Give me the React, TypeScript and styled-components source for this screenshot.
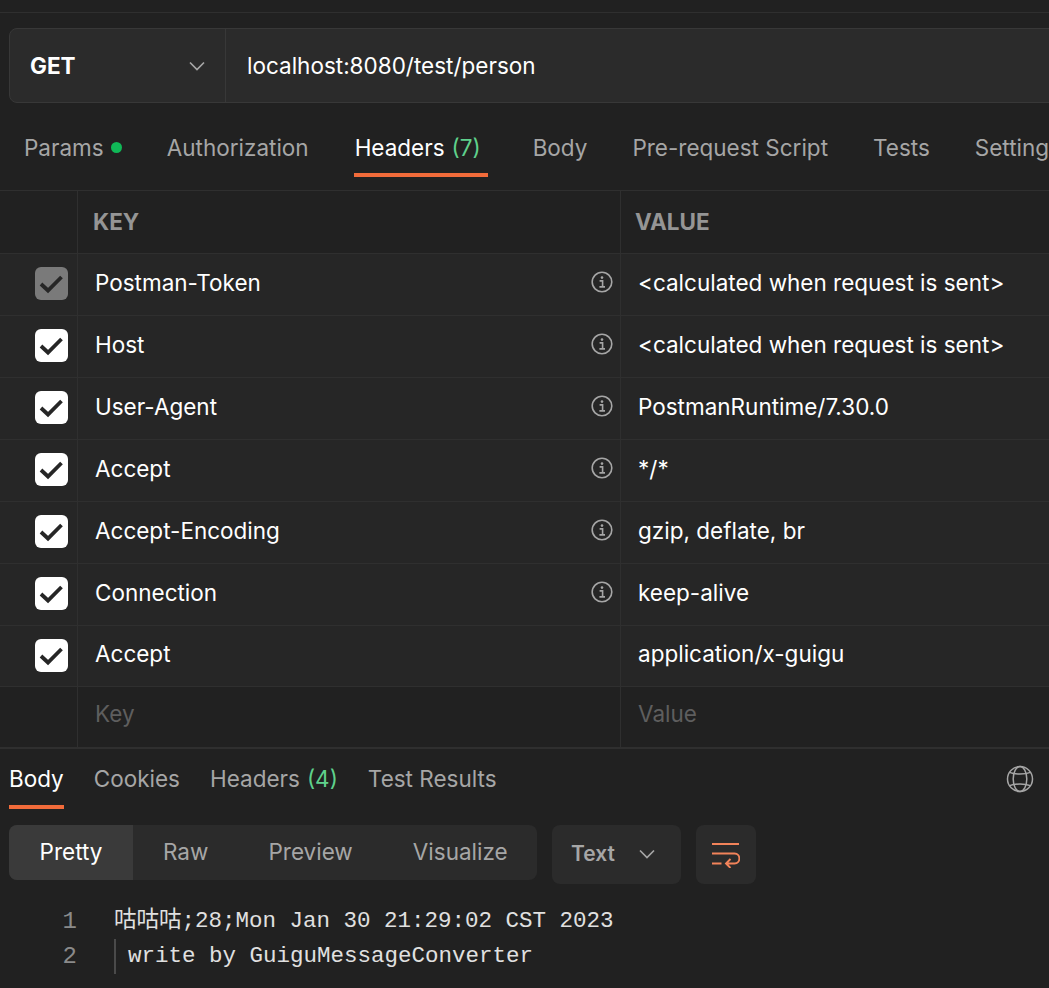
import React from "react";
import styled, { createGlobalStyle } from "styled-components";

const GlobalStyle = createGlobalStyle`
  html, body {
    margin: 0;
    background: #212121;
  }
  * {
    box-sizing: border-box;
  }
`;

interface headerRow {
  key: string;
  value: string;
  info?: boolean;
  locked?: boolean;
}

const rows: headerRow[] = [
  { key: "Postman-Token", value: "<calculated when request is sent>", info: true, locked: true },
  { key: "Host", value: "<calculated when request is sent>", info: true },
  { key: "User-Agent", value: "PostmanRuntime/7.30.0", info: true },
  { key: "Accept", value: "*/*", info: true },
  { key: "Accept-Encoding", value: "gzip, deflate, br", info: true },
  { key: "Connection", value: "keep-alive", info: true },
  { key: "Accept", value: "application/x-guigu" },
];

const Chevron = () => (
  <svg width="18" height="18" viewBox="0 0 18 18" fill="none">
    <path d="M2 5.5 9 12.5 16 5.5" stroke="#a6a6a6" strokeWidth="1.7" />
  </svg>
);

const InfoIcon = () => (
  <svg width="22" height="22" viewBox="0 0 22 22" fill="none">
    <circle cx="11" cy="11" r="9.8" stroke="#a6a6a6" strokeWidth="1.6" />
    <circle cx="11" cy="6.6" r="1.3" fill="#a6a6a6" />
    <path d="M8.6 9.9H11.6V15.6M8.4 15.9H14" stroke="#a6a6a6" strokeWidth="1.6" />
  </svg>
);

const CheckIcon = () => (
  <svg width="33" height="33" viewBox="0 0 33 33" fill="none">
    <path d="M6 17 13 23.5 26.5 10" stroke="#262626" strokeWidth="3.8" />
  </svg>
);

const GlobeIcon = () => (
  <svg width="28" height="28" viewBox="0 0 28 28" fill="none" stroke="#a6a6a6" strokeWidth="1.5">
    <circle cx="14" cy="14" r="12.5" />
    <ellipse cx="14" cy="14" rx="6.8" ry="12.5" />
    <path d="M3.6 7.4C9 9.6 19 9.6 24.4 7.4M3.6 20.6C9 18.4 19 18.4 24.4 20.6" />
  </svg>
);

const WrapIcon = () => (
  <svg width="28" height="26" viewBox="0 0 28 26" fill="none" stroke="#f2835a" strokeWidth="1.9">
    <path d="M0 2H27M0 11.5H22.5C29 11.5 29 21.5 22.5 21.5H14M0 21.5H9.5M18.5 17 14 21.5 18.5 26" />
  </svg>
);

const App = () => {
  return (
    <Page>
      <GlobalStyle />
      <TopBar />
      <UrlRow>
        <MethodBox>
          GET
          <Chevron />
        </MethodBox>
        <UrlBox>localhost:8080/test/person</UrlBox>
      </UrlRow>
      <RequestTabs>
        <RequestTab>
          Params <Dot />
        </RequestTab>
        <RequestTab>Authorization</RequestTab>
        <ActiveRequestTab>
          Headers <Count>(7)</Count>
        </ActiveRequestTab>
        <RequestTab>Body</RequestTab>
        <RequestTab>Pre-request Script</RequestTab>
        <RequestTab>Tests</RequestTab>
        <RequestTab>Settings</RequestTab>
      </RequestTabs>
      <Table>
        <HeadRow>
          <CheckCell />
          <HeadCell>KEY</HeadCell>
          <HeadCell>VALUE</HeadCell>
        </HeadRow>
        {rows.map((row, i) => (
          <Row key={i}>
            <CheckCell>
              <CheckBox $locked={row.locked}>
                <CheckIcon />
              </CheckBox>
            </CheckCell>
            <KeyCell>
              {row.key}
              {row.info && <InfoIcon />}
            </KeyCell>
            <ValueCell>{row.value}</ValueCell>
          </Row>
        ))}
        <EmptyRow>
          <CheckCell />
          <KeyCell $placeholder>Key</KeyCell>
          <ValueCell $placeholder>Value</ValueCell>
        </EmptyRow>
      </Table>
      <ResponseTabs>
        <ActiveResponseTab>Body</ActiveResponseTab>
        <ResponseTab>Cookies</ResponseTab>
        <ResponseTab>
          Headers <Count>(4)</Count>
        </ResponseTab>
        <ResponseTab>Test Results</ResponseTab>
        <GlobeSlot>
          <GlobeIcon />
        </GlobeSlot>
      </ResponseTabs>
      <Toolbar>
        <Segments>
          <ActiveSegment>Pretty</ActiveSegment>
          <Segment>Raw</Segment>
          <Segment>Preview</Segment>
          <Segment>Visualize</Segment>
        </Segments>
        <FormatSelect>
          Text
          <Chevron />
        </FormatSelect>
        <WrapButton>
          <WrapIcon />
        </WrapButton>
      </Toolbar>
      <Code>
        <CodeLine>
          <LineNumber>1</LineNumber>
          <CodeText>咕咕咕;28;Mon Jan 30 21:29:02 CST 2023</CodeText>
        </CodeLine>
        <CodeLine>
          <LineNumber>2</LineNumber>
          <IndentedText>write by GuiguMessageConverter</IndentedText>
        </CodeLine>
      </Code>
    </Page>
  );
};

export default App;

const Page = styled.div`
  width: 1049px;
  height: 988px;
  overflow: hidden;
  background: #212121;
  font-family: Inter, "Noto Sans CJK SC", sans-serif;
  font-size: 22.5px;
  color: #ffffff;
`;
const TopBar = styled.div`
  height: 13px;
  border-bottom: 1px solid #2f2f2f;
`;
const UrlRow = styled.div`
  display: flex;
  width: 1100px;
  height: 75px;
  margin: 15px 0 0 9px;
  background: #2b2b2b;
  border: 1px solid #383838;
  border-radius: 8px;
`;
const MethodBox = styled.div`
  display: flex;
  align-items: center;
  justify-content: space-between;
  width: 216px;
  padding: 0 19px 0 20px;
  border-right: 1px solid #383838;
  font-weight: 700;
`;
const UrlBox = styled.div`
  display: flex;
  align-items: center;
  padding-left: 21px;
`;
const RequestTabs = styled.div`
  display: flex;
  gap: 45px;
  height: 88px;
  padding-left: 24px;
  white-space: nowrap;
  border-bottom: 1px solid #2f2f2f;
`;
const RequestTab = styled.div`
  display: flex;
  flex-shrink: 0;
  align-items: center;
  gap: 7px;
  height: 74px;
  padding-top: 14px;
  color: #a6a6a6;
`;
const ActiveRequestTab = styled(RequestTab)`
  color: #ffffff;
  width: 134px;
  padding-left: 1px;
  box-shadow: inset 0 -4px 0 #f26b3a;
`;
const Count = styled.span`
  color: #5fd18c;
`;
const Dot = styled.span`
  width: 11px;
  height: 11px;
  border-radius: 50%;
  background: #10b857;
`;
const Table = styled.div`
  border-bottom: 2px solid #2f2f2f;
`;
const gridColumns = "78px 543px 1fr";
const HeadRow = styled.div`
  display: grid;
  grid-template-columns: ${gridColumns};
  height: 63px;
  border-bottom: 1px solid #2f2f2f;
`;
const Row = styled.div`
  display: grid;
  grid-template-columns: ${gridColumns};
  height: 62px;
  background: #262626;
  border-bottom: 1px solid #2f2f2f;
  &:nth-child(8) {
    height: 61px;
  }
`;
const EmptyRow = styled(Row)`
  height: 60px;
  background: #212121;
  border-bottom: 0;
`;
const CheckCell = styled.div`
  display: flex;
  align-items: center;
  justify-content: flex-end;
  padding: 0 9px 2px 0;
  border-right: 1px solid #2f2f2f;
`;
const CheckBox = styled.div<{ $locked?: boolean }>`
  width: 33px;
  height: 33px;
  border-radius: 6px;
  background: ${(p) => (p.$locked ? "#7a7a7a" : "#ffffff")};
`;
const HeadCell = styled.div`
  display: flex;
  align-items: center;
  padding: 0 0 2px 15px;
  font-weight: 700;
  color: #959595;
  border-right: 1px solid #2f2f2f;
  &:last-child {
    padding-left: 14px;
    border-right: 0;
  }
`;
const KeyCell = styled.div<{ $placeholder?: boolean }>`
  display: flex;
  align-items: center;
  justify-content: space-between;
  padding: 0 7px ${(p) => (p.$placeholder ? "7px" : "5px")} 17px;
  color: ${(p) => (p.$placeholder ? "#5e5e5e" : "#ffffff")};
  border-right: 1px solid #2f2f2f;
`;
const ValueCell = styled.div<{ $placeholder?: boolean }>`
  display: flex;
  align-items: center;
  padding: 0 0 ${(p) => (p.$placeholder ? "7px" : "5px")} 17px;
  color: ${(p) => (p.$placeholder ? "#5e5e5e" : "#ffffff")};
`;
const ResponseTabs = styled.div`
  display: flex;
  gap: 30px;
  height: 60px;
  padding: 0 15px 0 9px;
`;
const ResponseTab = styled.div`
  display: flex;
  align-items: center;
  gap: 7px;
  height: 60px;
  padding-bottom: 2px;
  color: #a6a6a6;
`;
const ActiveResponseTab = styled(ResponseTab)`
  color: #ffffff;
  box-shadow: inset 0 -4px 0 #f26b3a;
`;
const GlobeSlot = styled.div`
  display: flex;
  align-items: center;
  height: 60px;
  margin-left: auto;
`;
const Toolbar = styled.div`
  display: flex;
  align-items: flex-start;
  gap: 15px;
  height: 59px;
  margin-top: 16px;
  padding-left: 9px;
`;
const Segments = styled.div`
  display: flex;
  width: 528px;
  height: 55px;
  background: #2b2b2b;
  border-radius: 8px;
  overflow: hidden;
`;
const Segment = styled.div`
  display: flex;
  flex-shrink: 0;
  align-items: center;
  justify-content: center;
  padding: 0 30px 3px;
  color: #a6a6a6;
`;
const ActiveSegment = styled(Segment)`
  width: 124px;
  background: #3a3a3a;
  color: #ffffff;
`;
const FormatSelect = styled.div`
  display: flex;
  align-items: center;
  justify-content: space-between;
  width: 129px;
  height: 59px;
  padding: 0 25px 2px 19px;
  background: #2b2b2b;
  border-radius: 8px;
  font-size: 21px;
  font-weight: 600;
  color: #a6a6a6;
`;
const WrapButton = styled.div`
  display: flex;
  align-items: center;
  justify-content: center;
  width: 60px;
  height: 59px;
  background: #2b2b2b;
  border-radius: 8px;
`;
const Code = styled.div`
  padding-top: 20px;
  font-family: "Liberation Mono", "Noto Sans CJK SC", monospace;
  font-size: 22.5px;
  line-height: 35px;
  color: #e0e0e0;
`;
const CodeLine = styled.div`
  display: flex;
  height: 35px;
`;
const LineNumber = styled.div`
  width: 77px;
  margin-right: 37px;
  font-size: 24px;
  text-align: right;
  color: #8a8a8a;
`;
const CodeText = styled.div`
  white-space: pre;
`;
const IndentedText = styled(CodeText)`
  padding-left: 12px;
  border-left: 2px solid #4a4a4a;
`;
